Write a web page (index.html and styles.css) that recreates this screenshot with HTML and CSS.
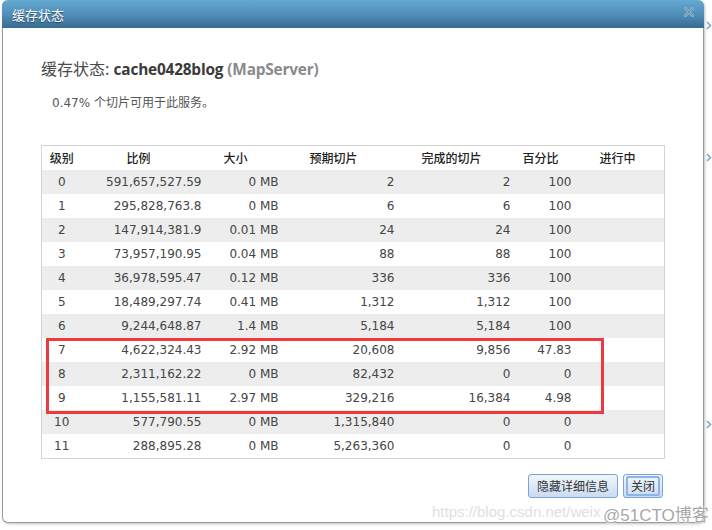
FILE: index.html
```html
<!DOCTYPE html>
<html lang="zh-CN">
<head>
<meta charset="utf-8">
<title>缓存状态</title>
<link rel="stylesheet" href="styles.css">
</head>
<body>
<div class="page">
  <div class="dialog">
    <div class="titlebar">
      <span class="title">缓存状态</span>
      <svg class="close" width="10" height="10" viewBox="0 0 10 10" aria-hidden="true">
        <path d="M1.5 1.5 L8.5 8.5 M8.5 1.5 L1.5 8.5" stroke="#8db1cb" stroke-width="3" stroke-linecap="square"/>
        <path d="M1.5 1.5 L8.5 8.5 M8.5 1.5 L1.5 8.5" stroke="#5b8fb3" stroke-width="1" stroke-linecap="square"/>
      </svg>
    </div>
    <div class="body">
      <h2 class="heading"><span class="lbl">缓存状态:</span> <b class="svc-name">cache0428blog</b> <span class="svc-type">(MapServer)</span></h2>
      <p class="summary">0.47% 个切片可用于此服务。</p>
      <div class="table-wrap">
        <table class="levels">
          <colgroup>
            <col class="c1"><col class="c2"><col class="c3"><col class="c4"><col class="c5"><col class="c6"><col class="c7">
          </colgroup>
          <thead>
            <tr>
              <th class="h1">级别</th>
              <th class="h2">比例</th>
              <th class="h3">大小</th>
              <th class="h4">预期切片</th>
              <th class="h5">完成的切片</th>
              <th class="h6">百分比</th>
              <th class="h7">进行中</th>
            </tr>
          </thead>
          <tbody>
            <tr><td>0</td><td>591,657,527.59</td><td>0 MB</td><td>2</td><td>2</td><td>100</td><td></td></tr>
            <tr><td>1</td><td>295,828,763.8</td><td>0 MB</td><td>6</td><td>6</td><td>100</td><td></td></tr>
            <tr><td>2</td><td>147,914,381.9</td><td>0.01 MB</td><td>24</td><td>24</td><td>100</td><td></td></tr>
            <tr><td>3</td><td>73,957,190.95</td><td>0.04 MB</td><td>88</td><td>88</td><td>100</td><td></td></tr>
            <tr><td>4</td><td>36,978,595.47</td><td>0.12 MB</td><td>336</td><td>336</td><td>100</td><td></td></tr>
            <tr><td>5</td><td>18,489,297.74</td><td>0.41 MB</td><td>1,312</td><td>1,312</td><td>100</td><td></td></tr>
            <tr><td>6</td><td>9,244,648.87</td><td>1.4 MB</td><td>5,184</td><td>5,184</td><td>100</td><td></td></tr>
            <tr><td>7</td><td>4,622,324.43</td><td>2.92 MB</td><td>20,608</td><td>9,856</td><td>47.83</td><td></td></tr>
            <tr><td>8</td><td>2,311,162.22</td><td>0 MB</td><td>82,432</td><td>0</td><td>0</td><td></td></tr>
            <tr><td>9</td><td>1,155,581.11</td><td>2.97 MB</td><td>329,216</td><td>16,384</td><td>4.98</td><td></td></tr>
            <tr><td>10</td><td>577,790.55</td><td>0 MB</td><td>1,315,840</td><td>0</td><td>0</td><td></td></tr>
            <tr><td>11</td><td>288,895.28</td><td>0 MB</td><td>5,263,360</td><td>0</td><td>0</td><td></td></tr>
          </tbody>
        </table>
        <div class="highlight"></div>
      </div>
      <div class="actions">
        <button class="btn" type="button">隐藏详细信息</button>
        <button class="btn btn-focus" type="button"><span class="focus-ring">关闭</span></button>
      </div>
    </div>
  </div>
  <div class="edge-arrows">
    <svg class="arrow a1" width="6" height="9" viewBox="0 0 6 9"><path d="M1 1 L4.5 4.5 L1 8" fill="none" stroke="#7fa6c2" stroke-width="1.6"/></svg>
    <svg class="arrow a2" width="6" height="9" viewBox="0 0 6 9"><path d="M1 1 L4.5 4.5 L1 8" fill="none" stroke="#7fa6c2" stroke-width="1.6"/></svg>
    <svg class="arrow a3" width="6" height="9" viewBox="0 0 6 9"><path d="M1 1 L4.5 4.5 L1 8" fill="none" stroke="#7fa6c2" stroke-width="1.6"/></svg>
  </div>
  <div class="watermark">
    <span class="wm-url">https://blog.csdn.net/weix</span>
    <span class="wm-brand">@51CTO博客</span>
  </div>
</div>
</body>
</html>
```

FILE: styles.css
```css
html, body {
  margin: 0;
  padding: 0;
  background: #ffffff;
}

body {
  font-family: "DejaVu Sans", "Noto Sans CJK SC", sans-serif;
  font-size: 12px;
  color: #444;
}

.page {
  position: relative;
  width: 712px;
  height: 530px;
  overflow: hidden;
}

.dialog {
  margin-left: 2px;
  width: 700px;
  height: 522px;
  border: 1px solid #9a9a9a;
  border-top: none;
  border-radius: 6px;
  background: #fff;
  box-shadow: 1px 1px 3px rgba(0, 0, 0, 0.25);
  display: flex;
  flex-direction: column;
}

.titlebar {
  height: 28px;
  margin: 0 -1px;
  border-radius: 6px 6px 0 0;
  background: linear-gradient(to bottom, #63a9d2 0%, #4f8cb6 55%, #396a90 100%);
  display: flex;
  align-items: center;
  justify-content: space-between;
  padding: 0 10px 0 10px;
}

.title {
  font-family: "Noto Sans CJK SC", sans-serif;
  font-size: 13px;
  color: #fff;
  text-shadow: 0 1px 1px rgba(0, 0, 0, 0.45);
  margin-top: 1px;
}

.close {
  display: block;
  margin-top: -4px;
}

.body {
  padding: 0 39px 0 38px;
  display: flex;
  flex-direction: column;
}

.heading {
  margin: 29px 0 0 0;
  font-size: 16px;
  line-height: 22px;
  font-weight: normal;
  font-family: "Open Sans", "Noto Sans CJK SC", sans-serif;
  color: #4a4a4a;
}

.heading .lbl {
  font-family: "Noto Sans CJK SC", sans-serif;
}

.svc-name {
  font-size: 15.4px;
  font-weight: bold;
  color: #3a3a3a;
  letter-spacing: -0.2px;
}

.svc-type {
  font-size: 15.4px;
  font-weight: bold;
  color: #8a8a8a;
  letter-spacing: -0.2px;
}

.summary {
  margin: 14px 0 0 11px;
  font-size: 12px;
  line-height: 16px;
  color: #555;
}

.table-wrap {
  position: relative;
  margin-top: 34px;
  width: 623px;
}

.levels {
  border-collapse: collapse;
  table-layout: fixed;
  width: 623px;
  border: 1px solid #d4d4d4;
}

.c1 { width: 40px; }
.c2 { width: 128px; }
.c3 { width: 77px; }
.c4 { width: 116px; }
.c5 { width: 116px; }
.c6 { width: 61px; }
.c7 { width: 85px; }

.levels th {
  height: 24px;
  padding: 0;
  text-align: left;
  font-family: "Noto Sans CJK SC", sans-serif;
  font-weight: 500;
  font-size: 12px;
  color: #222;
  line-height: 22px;
}

.levels th.h1 { text-align: center; }
.levels th.h2 { padding-left: 45px; }
.levels th.h3 { padding-left: 14px; }
.levels th.h4 { padding-left: 23px; }
.levels th.h5 { padding-left: 19px; }
.levels th.h6 { padding-left: 4px; }
.levels th.h7 { padding-left: 20px; }

.levels td {
  height: 24px;
  padding: 0 8px 0 0;
  line-height: 24px;
  text-align: right;
  white-space: nowrap;
  color: #454545;
}

.levels td:first-child {
  text-align: center;
  padding: 0;
}

.levels tbody tr:nth-child(odd) {
  background: #ededed;
}

.highlight {
  position: absolute;
  left: 5px;
  top: 193px;
  width: 552px;
  height: 70px;
  border: 3px solid #ee3a3e;
  pointer-events: none;
}

.actions {
  margin-top: 15px;
  display: flex;
  justify-content: flex-end;
  gap: 5px;
  padding-right: 1px;
}

.btn {
  height: 24px;
  padding: 0 8px;
  border: 1px solid #7fa3ce;
  border-radius: 3px;
  background: linear-gradient(to bottom, #f1f6fc 0%, #dde9f7 50%, #cadcf2 100%);
  font-family: "Noto Sans CJK SC", sans-serif;
  font-size: 12px;
  color: #333;
  line-height: 20px;
}

.btn-focus {
  padding: 0 2px;
  width: 40px;
}

.focus-ring {
  display: block;
  border: 2px solid #8db4ea;
  border-radius: 2px;
  line-height: 16px;
  padding: 0 2px;
}

.edge-arrows .arrow {
  position: absolute;
  left: 706px;
}

.a1 { top: 21px; }
.a2 { top: 153px; }
.a3 { top: 420px; }

.watermark {
  position: absolute;
  left: 432px;
  top: 501px;
  height: 22px;
  white-space: nowrap;
  pointer-events: none;
}

.wm-url {
  position: absolute;
  left: 0;
  top: 2px;
  font-family: "Liberation Sans", sans-serif;
  font-size: 15px;
  color: #e0e0e0;
}

.wm-brand {
  position: absolute;
  left: 171px;
  top: 0;
  font-family: "Liberation Sans", "Noto Sans CJK SC", sans-serif;
  font-size: 17px;
  color: #a8a8a8;
  text-shadow: 0 0 1px #fff, 0 0 2px #fff;
}
```
